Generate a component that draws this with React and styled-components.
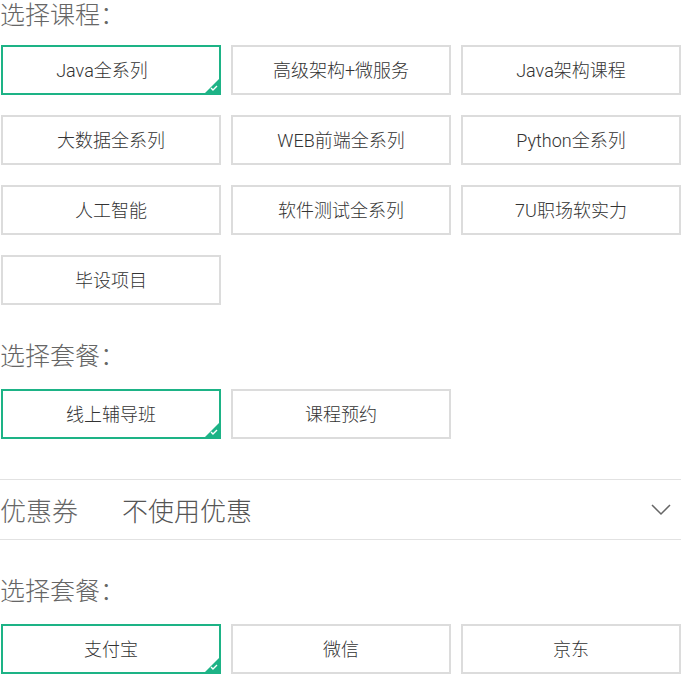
import React, { useState } from 'react';
import styled, { createGlobalStyle } from 'styled-components';

const green = '#1db386';
const grey = '#dcdcdc';

const GlobalStyle = createGlobalStyle`
  body {
    margin: 0;
    background: #fff;
    font-family: Roboto, "Noto Sans CJK SC", sans-serif;
  }
`;

const Page = styled.div`
  width: 681px;
  overflow: hidden;
`;

const Title = styled.h3`
  margin: ${p => p.$top}px 0 ${p => p.$bottom}px;
  font-size: 25px;
  line-height: 30px;
  font-weight: 300;
  color: #666;
`;

const Grid = styled.div`
  display: grid;
  grid-template-columns: repeat(3, 220px);
  column-gap: 10px;
  row-gap: 20px;
  padding-left: 1px;
`;

const Option = styled.button`
  position: relative;
  box-sizing: border-box;
  height: 50px;
  padding: 0 0 3px;
  background: #fff;
  border: 2px solid ${p => (p.$active ? green : grey)};
  font-family: Roboto, "Noto Sans CJK SC", sans-serif;
  font-size: 18px;
  font-weight: 300;
  color: #333;
  white-space: pre;
  cursor: pointer;
  overflow: hidden;
`;

const Corner = styled.span`
  position: absolute;
  right: 0;
  bottom: 0;
  width: 0;
  height: 0;
  border-style: solid;
  border-width: 0 0 14px 14px;
  border-color: transparent transparent ${green} transparent;

  svg {
    position: absolute;
    right: 1px;
    top: 6px;
  }
`;

const CouponRow = styled.div`
  display: flex;
  align-items: center;
  height: 59px;
  margin-top: 40px;
  border-top: 1px solid #e2e2e2;
  border-bottom: 1px solid #e2e2e2;
  font-size: 26px;
  font-weight: 300;
  color: #666;
`;

const CouponLabel = styled.span`
  width: 122px;
`;

const CouponValue = styled.span`
  flex: 1;
  color: #555;
`;

const Chevron = styled.svg`
  margin-right: 10px;
`;

const Check = () => (
  <Corner>
    <svg width="8" height="6" viewBox="0 0 8 6">
      <path d="M1 3 L3 5 L7 1" fill="none" stroke="#fff" strokeWidth="1.4" />
    </svg>
  </Corner>
);

const OptionGroup = ({ items, active, onPick }) => (
  <Grid>
    {items.map((item, i) => (
      <Option key={item} $active={i === active} onClick={() => onPick(i)} type="button">
        {item}
        {i === active && <Check />}
      </Option>
    ))}
  </Grid>
);

const courses = [
  'Java全系列\u3000', '高级架构+微服务', 'Java架构课程',
  '大数据全系列', 'WEB前端全系列', 'Python全系列',
  '人工智能', '软件测试全系列', '7U职场软实力',
  '毕设项目',
];
const plans = ['线上辅导班', '课程预约'];
const pays = ['支付宝', '微信', '京东'];

const App = () => {
  const [course, setCourse] = useState(0);
  const [plan, setPlan] = useState(0);
  const [pay, setPay] = useState(0);

  return (
    <Page>
      <GlobalStyle />
      <Title $top={1} $bottom={14}>选择课程：</Title>
      <OptionGroup items={courses} active={course} onPick={setCourse} />
      <Title $top={37} $bottom={17}>选择套餐：</Title>
      <OptionGroup items={plans} active={plan} onPick={setPlan} />
      <CouponRow>
        <CouponLabel>优惠券</CouponLabel>
        <CouponValue>不使用优惠</CouponValue>
        <Chevron width="20" height="12" viewBox="0 0 20 12">
          <path d="M1 1 L10 10 L19 1" fill="none" stroke="#666" strokeWidth="1.5" />
        </Chevron>
      </CouponRow>
      <Title $top={37} $bottom={17}>选择套餐：</Title>
      <OptionGroup items={pays} active={pay} onPick={setPay} />
    </Page>
  );
};

export default App;
